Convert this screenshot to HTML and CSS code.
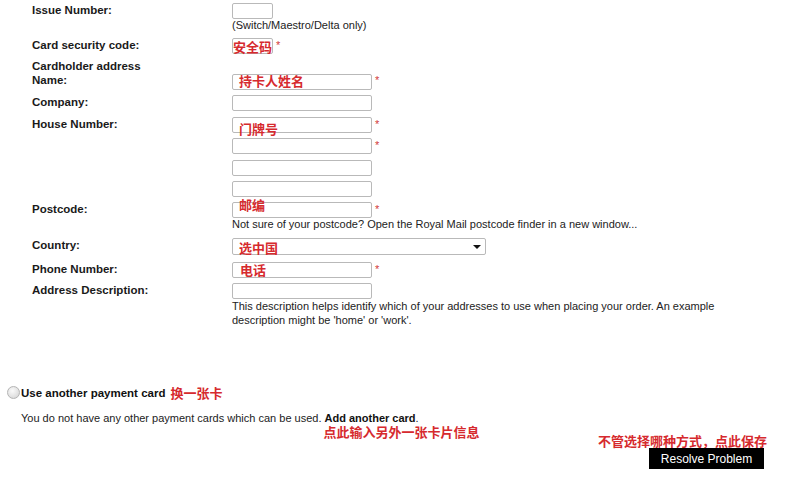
FILE: index.html
```html
<!DOCTYPE html>
<html lang="en">
<head>
<meta charset="utf-8">
<title>Payment details</title>
<link rel="stylesheet" href="styles.css">
</head>
<body>
<div class="form">
  <div class="row r-issue">
    <div class="label">Issue Number:</div>
    <div class="field">
      <div class="line"><input class="in short" type="text"></div>
      <div class="note">(Switch/Maestro/Delta only)</div>
    </div>
  </div>
  <div class="row r-sec">
    <div class="label">Card security code:</div>
    <div class="field">
      <div class="line"><input class="in short" type="text"><span class="req">*</span><span class="ann ann-sec">安全码</span></div>
    </div>
  </div>
  <div class="row r-head">
    <div class="label">Cardholder address</div>
  </div>
  <div class="row r-name">
    <div class="label">Name:</div>
    <div class="field">
      <div class="line"><input class="in" type="text"><span class="req">*</span><span class="ann ann-name">持卡人姓名</span></div>
    </div>
  </div>
  <div class="row r-company">
    <div class="label">Company:</div>
    <div class="field">
      <div class="line"><input class="in" type="text"></div>
    </div>
  </div>
  <div class="row r-house">
    <div class="label">House Number:</div>
    <div class="field">
      <div class="line"><input class="in" type="text"><span class="req">*</span><span class="ann ann-house">门牌号</span></div>
      <div class="line l2"><input class="in" type="text"><span class="req">*</span></div>
      <div class="line l3"><input class="in" type="text"></div>
      <div class="line l4"><input class="in" type="text"></div>
    </div>
  </div>
  <div class="row r-post">
    <div class="label">Postcode:</div>
    <div class="field">
      <div class="line"><input class="in" type="text"><span class="req">*</span><span class="ann ann-post">邮编</span></div>
      <div class="note">Not sure of your postcode? Open the Royal Mail postcode finder in a new window...</div>
    </div>
  </div>
  <div class="row r-country">
    <div class="label">Country:</div>
    <div class="field">
      <div class="line"><div class="select"><span class="ann ann-country">选中国</span><span class="arrow"></span></div></div>
    </div>
  </div>
  <div class="row r-phone">
    <div class="label">Phone Number:</div>
    <div class="field">
      <div class="line"><input class="in" type="text"><span class="req">*</span><span class="ann ann-phone">电话</span></div>
    </div>
  </div>
  <div class="row r-addr">
    <div class="label">Address Description:</div>
    <div class="field">
      <div class="line"><input class="in" type="text"></div>
      <div class="desc">This description helps identify which of your addresses to use when placing your order. An example description might be 'home' or 'work'.</div>
    </div>
  </div>
</div>

<div class="payment">
  <div class="option">
    <span class="radio"></span>
    <span class="opt-label">Use another payment card</span>
    <span class="cn-note">换一张卡</span>
  </div>
  <p class="info">You do not have any other payment cards which can be used. <span class="add">Add another card<span class="ann ann-add">点此输入另外一张卡片信息</span></span>.</p>
</div>

<div class="footer">
  <div class="cn-save">不管选择哪种方式，点此保存</div>
  <button class="resolve" type="button">Resolve Problem</button>
</div>
</body>
</html>
```

FILE: styles.css
```css
html, body {
  margin: 0;
  padding: 0;
  background: #ffffff;
}

body {
  font-family: "Liberation Sans", Arial, sans-serif;
  font-size: 11px;
  color: #222222;
  width: 786px;
  height: 487px;
  overflow: hidden;
}

.form {
  padding: 3px 0 0 32px;
}

.row {
  display: grid;
  grid-template-columns: 200px 1fr;
}

.label {
  font-weight: bold;
  font-size: 11.5px;
  line-height: 13px;
  color: #1a1a1a;
  padding-top: 1px;
}

.r-sec { margin-top: 6px; }
.r-head { margin-top: 6px; }
.r-name { margin-top: 0; }
.r-company { margin-top: 5px; }
.r-house { margin-top: 6px; }
.r-post { margin-top: 5px; }
.r-country { margin-top: 7px; }
.r-phone { margin-top: 7px; }
.r-addr { margin-top: 5px; }

.r-head .label { padding-top: 0; }

.line {
  position: relative;
  display: flex;
  align-items: flex-start;
}

.l2 { margin-top: 5px; }
.l3 { margin-top: 6px; }
.l4 { margin-top: 5px; }

.in {
  box-sizing: border-box;
  width: 140px;
  height: 16px;
  margin: 0;
  padding: 0 2px;
  border: 1px solid #b9b9b9;
  border-radius: 2px;
  background: #ffffff;
  font: 11px "Liberation Sans", Arial, sans-serif;
}

.r-name .in { margin-top: 1px; }

.in.short {
  width: 41px;
}

.req {
  color: #d23a3a;
  font-size: 11px;
  line-height: 11px;
  margin-left: 3px;
  margin-top: 2px;
}

.note {
  line-height: 13px;
  color: #222222;
}

.desc {
  width: 500px;
  line-height: 14px;
  color: #222222;
}

.select {
  position: relative;
  box-sizing: border-box;
  width: 254px;
  height: 17px;
  border: 1px solid #b9b9b9;
  border-radius: 2px;
  background: #ffffff;
}

.arrow {
  position: absolute;
  right: 4px;
  top: 6px;
  width: 0;
  height: 0;
  border-left: 4px solid transparent;
  border-right: 4px solid transparent;
  border-top: 4px solid #111111;
}

.ann,
.cn-note,
.cn-save {
  font-family: "Noto Sans CJK SC", sans-serif;
  font-weight: bold;
  font-size: 13px;
  line-height: 15px;
  color: #d62a2e;
  white-space: nowrap;
}

.ann {
  position: absolute;
}

.ann-sec { left: 1px; top: 1px; }
.ann-name { left: 7px; top: 0; }
.ann-house { left: 7px; top: 4px; }
.ann-post { left: 7px; top: -5px; }
.ann-country { left: 6px; top: 1px; }
.ann-phone { left: 8px; top: 0; }

.payment {
  margin-top: 59px;
  padding-left: 7px;
}

.option {
  display: flex;
  align-items: center;
  height: 13px;
}

.radio {
  box-sizing: border-box;
  width: 13px;
  height: 13px;
  border-radius: 50%;
  border: 1px solid #b4b4b4;
  background: radial-gradient(circle at 40% 35%, #fafafa 0%, #e2e2e2 60%, #d0d0d0 100%);
  margin-right: 1px;
}

.opt-label {
  font-weight: bold;
  font-size: 11.5px;
  color: #111111;
}

.cn-note {
  margin-left: 5px;
}

.info {
  margin: 13px 0 0 14px;
  line-height: 13px;
  color: #222222;
}

.add {
  position: relative;
  font-weight: bold;
  color: #111111;
}

.ann-add {
  left: -1px;
  top: 14px;
  line-height: 12px;
}

.footer {
  display: flex;
  flex-direction: column;
  align-items: flex-end;
  padding-right: 22px;
  margin-top: 8px;
}

.cn-save {
  margin-right: -3px;
}

.resolve {
  width: 115px;
  height: 21px;
  margin: 0;
  padding: 0;
  border: none;
  border-radius: 0;
  background: #000000;
  color: #ffffff;
  font: 12px "Liberation Sans", Arial, sans-serif;
  cursor: pointer;
}
```
